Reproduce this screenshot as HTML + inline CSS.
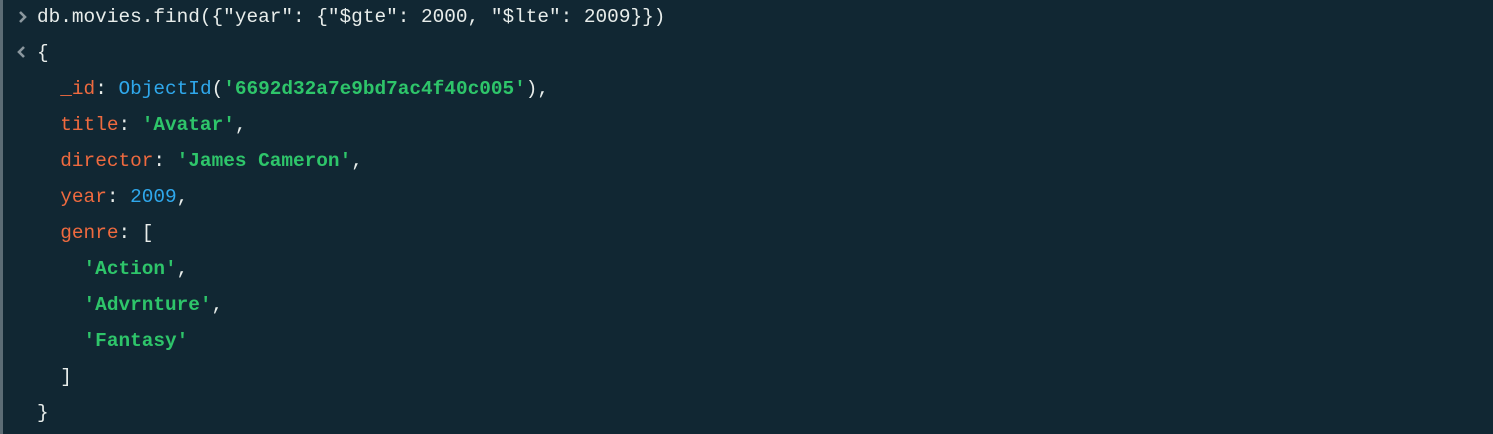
<!DOCTYPE html>
<html><head><style>
html,body{margin:0;padding:0;}
body{width:1493px;height:434px;background:#112733;overflow:hidden;position:relative;font-family:"Liberation Mono",monospace;font-size:19.4px;color:#e8edeb;}
.bar{position:absolute;left:0;top:0;width:3px;height:434px;background:#5c6c75;}
.l{position:absolute;left:37px;white-space:pre;line-height:22px;}
.k{color:#ef6a3f}.s{color:#2ec56a;font-weight:bold}.n{color:#2fa8ec}
.ic{position:absolute;left:15px;}
</style></head><body>
<div class="bar"></div>
<svg class="ic" style="top:8px" width="14" height="18" viewBox="0 0 14 18"><path d="M5 4 L10 9 L5 14" fill="none" stroke="#8b979e" stroke-width="2.6"/></svg>
<svg class="ic" style="top:43px" width="14" height="18" viewBox="0 0 14 18"><path d="M9 4 L4 9 L9 14" fill="none" stroke="#8b979e" stroke-width="2.6"/></svg>
<div class="l" style="top:6px">db.movies.find({"year": {"$gte": 2000, "$lte": 2009}})</div>
<div class="l" style="top:42px">{</div>
<div class="l" style="top:78px">  <span class="k">_id</span>: <span class="n">ObjectId</span>(<span class="s">'6692d32a7e9bd7ac4f40c005'</span>),</div>
<div class="l" style="top:114px">  <span class="k">title</span>: <span class="s">'Avatar'</span>,</div>
<div class="l" style="top:150px">  <span class="k">director</span>: <span class="s">'James Cameron'</span>,</div>
<div class="l" style="top:186px">  <span class="k">year</span>: <span class="n">2009</span>,</div>
<div class="l" style="top:222px">  <span class="k">genre</span>: [</div>
<div class="l" style="top:258px">    <span class="s">'Action'</span>,</div>
<div class="l" style="top:294px">    <span class="s">'Advrnture'</span>,</div>
<div class="l" style="top:330px">    <span class="s">'Fantasy'</span></div>
<div class="l" style="top:366px">  ]</div>
<div class="l" style="top:402px">}</div>
</body></html>
